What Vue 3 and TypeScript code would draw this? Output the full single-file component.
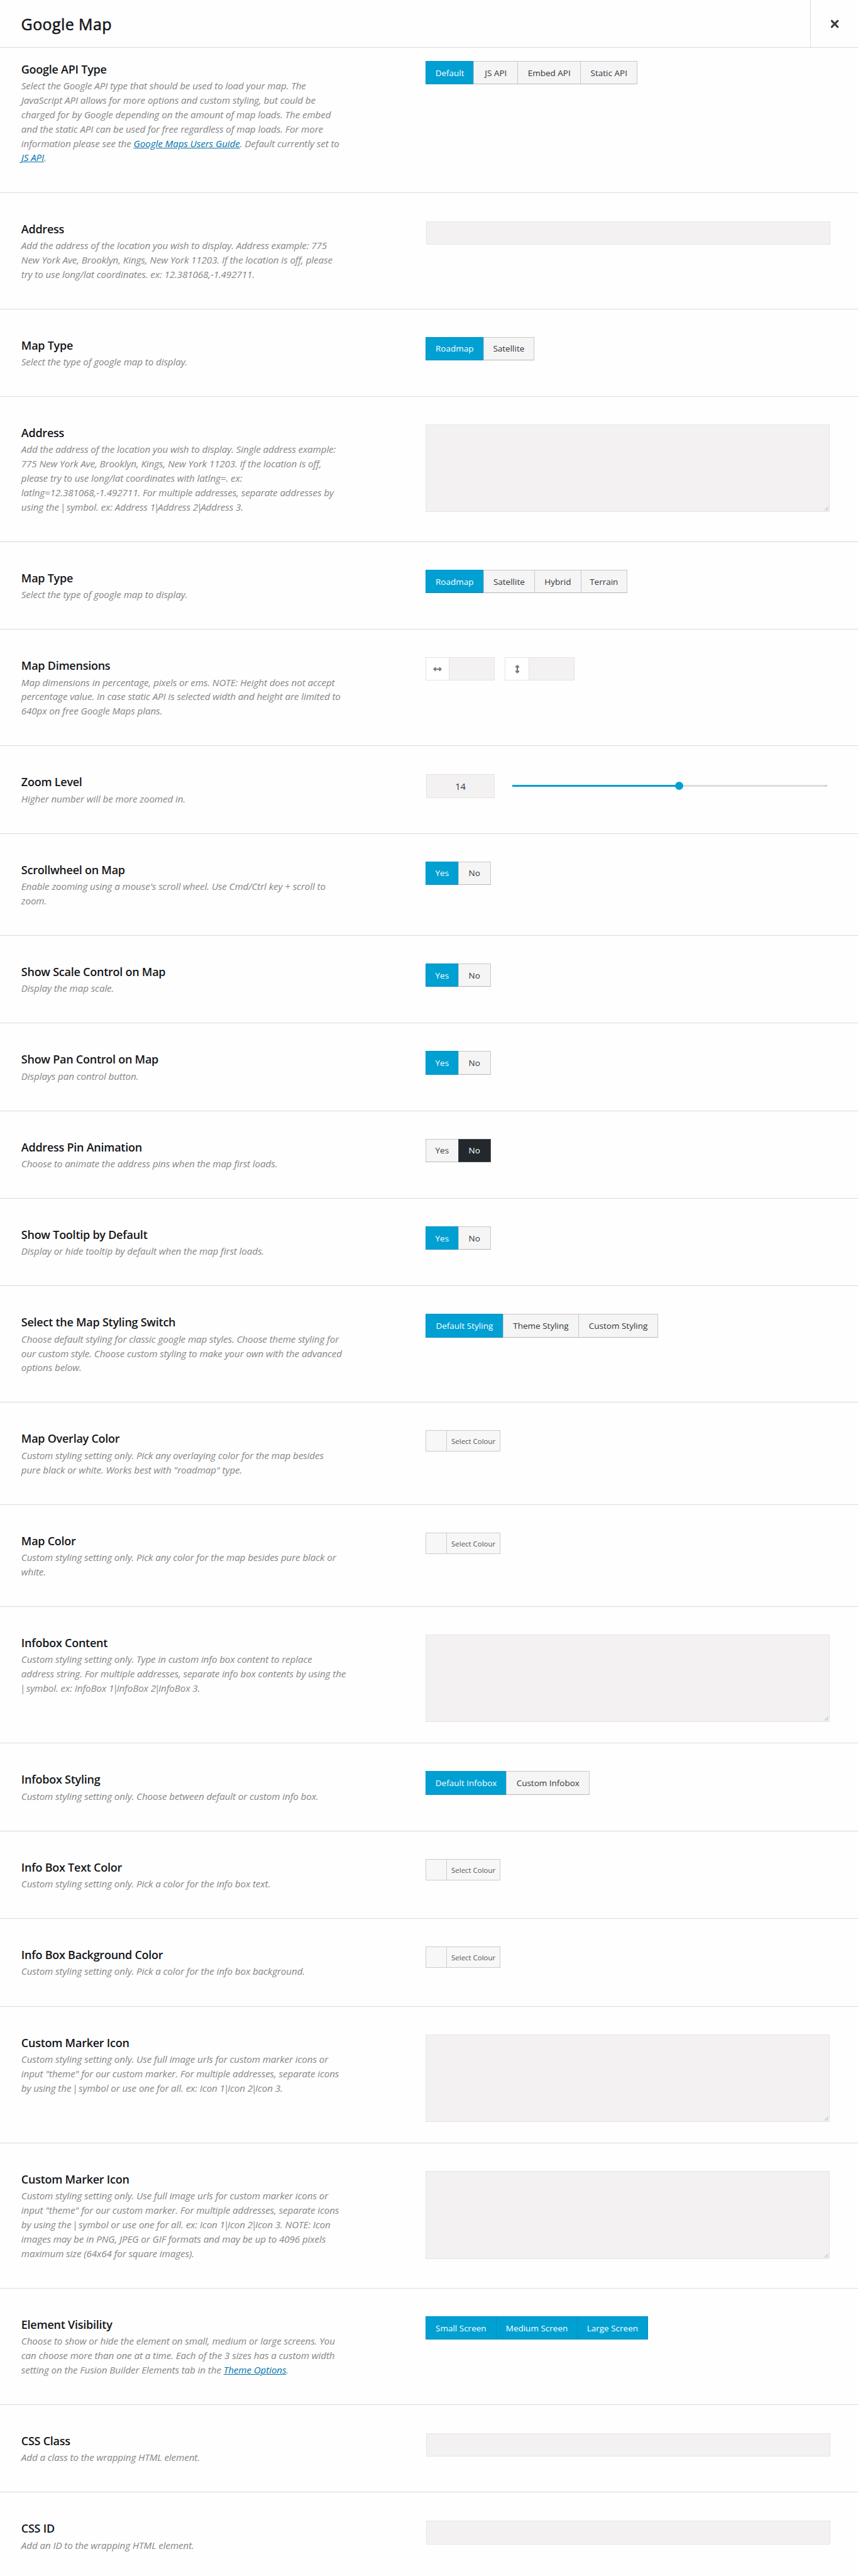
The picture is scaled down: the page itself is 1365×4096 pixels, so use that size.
<script setup lang="ts">
import { ref } from 'vue'

interface Option { label: string; width: number; tone?: 'on' | 'off' }
interface Part { text: string; link?: boolean; bar?: boolean }
interface Field {
  title: string
  lines: string[]
  kind: 'buttons' | 'input' | 'textarea' | 'dimensions' | 'range' | 'color'
  options?: Option[]
}

const yesNo = (value: boolean): Option[] => [
  { label: 'Yes', width: 52.1, tone: value ? 'on' : undefined },
  { label: 'No', width: 51.7, tone: value ? undefined : 'off' },
]

// Links are written as [label]; bars get their own span so they can be tightened.
const parse = (line: string): Part[] =>
  line
    .split(/(\[[^\]]+\]|\|)/)
    .filter((s) => s !== '')
    .map((s) =>
      s === '|' ? { text: s, bar: true } : s.startsWith('[') ? { text: s.slice(1, -1), link: true } : { text: s },
    )

const fields: Field[] = [
  {
    title: 'Google API Type',
    lines: [
      'Select the Google API type that should be used to load your map. The',
      'JavaScript API allows for more options and custom styling, but could be',
      'charged for by Google depending on the amount of map loads. The embed',
      'and the static API can be used for free regardless of map loads. For more',
      'information please see the [Google Maps Users Guide]. Default currently set to',
      '[JS API].',
    ],
    kind: 'buttons',
    options: [
      { label: 'Default', width: 76.7, tone: 'on' },
      { label: 'JS API', width: 69.7 },
      { label: 'Embed API', width: 100.1 },
      { label: 'Static API', width: 91 },
    ],
  },
  {
    title: 'Address',
    lines: [
      'Add the address of the location you wish to display. Address example: 775',
      'New York Ave, Brooklyn, Kings, New York 11203. If the location is off, please',
      'try to use long/lat coordinates. ex: 12.381068,-1.492711.',
    ],
    kind: 'input',
  },
  {
    title: 'Map Type',
    lines: ['Select the type of google map to display.'],
    kind: 'buttons',
    options: [
      { label: 'Roadmap', width: 91.9, tone: 'on' },
      { label: 'Satellite', width: 81.3 },
    ],
  },
  {
    title: 'Address',
    lines: [
      'Add the address of the location you wish to display. Single address example:',
      '775 New York Ave, Brooklyn, Kings, New York 11203. If the location is off,',
      'please try to use long/lat coordinates with latlng=. ex:',
      'latlng=12.381068,-1.492711. For multiple addresses, separate addresses by',
      'using the | symbol. ex: Address 1|Address 2|Address 3.',
    ],
    kind: 'textarea',
  },
  {
    title: 'Map Type',
    lines: ['Select the type of google map to display.'],
    kind: 'buttons',
    options: [
      { label: 'Roadmap', width: 91.9, tone: 'on' },
      { label: 'Satellite', width: 81.3 },
      { label: 'Hybrid', width: 73.8 },
      { label: 'Terrain', width: 74 },
    ],
  },
  {
    title: 'Map Dimensions',
    lines: [
      'Map dimensions in percentage, pixels or ems. NOTE: Height does not accept',
      'percentage value. In case static API is selected width and height are limited to',
      '640px on free Google Maps plans.',
    ],
    kind: 'dimensions',
  },
  { title: 'Zoom Level', lines: ['Higher number will be more zoomed in.'], kind: 'range' },
  {
    title: 'Scrollwheel on Map',
    lines: ["Enable zooming using a mouse's scroll wheel. Use Cmd/Ctrl key + scroll to", 'zoom.'],
    kind: 'buttons',
    options: yesNo(true),
  },
  { title: 'Show Scale Control on Map', lines: ['Display the map scale.'], kind: 'buttons', options: yesNo(true) },
  { title: 'Show Pan Control on Map', lines: ['Displays pan control button.'], kind: 'buttons', options: yesNo(true) },
  {
    title: 'Address Pin Animation',
    lines: ['Choose to animate the address pins when the map first loads.'],
    kind: 'buttons',
    options: yesNo(false),
  },
  {
    title: 'Show Tooltip by Default',
    lines: ['Display or hide tooltip by default when the map first loads.'],
    kind: 'buttons',
    options: yesNo(true),
  },
  {
    title: 'Select the Map Styling Switch',
    lines: [
      'Choose default styling for classic google map styles. Choose theme styling for',
      'our custom style. Choose custom styling to make your own with the advanced',
      'options below.',
    ],
    kind: 'buttons',
    options: [
      { label: 'Default Styling', width: 123.1, tone: 'on' },
      { label: 'Theme Styling', width: 120.2 },
      { label: 'Custom Styling', width: 127 },
    ],
  },
  {
    title: 'Map Overlay Color',
    lines: [
      'Custom styling setting only. Pick any overlaying color for the map besides',
      'pure black or white. Works best with "roadmap" type.',
    ],
    kind: 'color',
  },
  {
    title: 'Map Color',
    lines: ['Custom styling setting only. Pick any color for the map besides pure black or', 'white.'],
    kind: 'color',
  },
  {
    title: 'Infobox Content',
    lines: [
      'Custom styling setting only. Type in custom info box content to replace',
      'address string. For multiple addresses, separate info box contents by using the',
      '| symbol. ex: InfoBox 1|InfoBox 2|InfoBox 3.',
    ],
    kind: 'textarea',
  },
  {
    title: 'Infobox Styling',
    lines: ['Custom styling setting only. Choose between default or custom info box.'],
    kind: 'buttons',
    options: [
      { label: 'Default Infobox', width: 128.6, tone: 'on' },
      { label: 'Custom Infobox', width: 132.8 },
    ],
  },
  {
    title: 'Info Box Text Color',
    lines: ['Custom styling setting only. Pick a color for the info box text.'],
    kind: 'color',
  },
  {
    title: 'Info Box Background Color',
    lines: ['Custom styling setting only. Pick a color for the info box background.'],
    kind: 'color',
  },
  {
    title: 'Custom Marker Icon',
    lines: [
      'Custom styling setting only. Use full image urls for custom marker icons or',
      'input "theme" for our custom marker. For multiple addresses, separate icons',
      'by using the | symbol or use one for all. ex: Icon 1|Icon 2|Icon 3.',
    ],
    kind: 'textarea',
  },
  {
    title: 'Custom Marker Icon',
    lines: [
      'Custom styling setting only. Use full image urls for custom marker icons or',
      'input "theme" for our custom marker. For multiple addresses, separate icons',
      'by using the | symbol or use one for all. ex: Icon 1|Icon 2|Icon 3. NOTE: Icon',
      'images may be in PNG, JPEG or GIF formats and may be up to 4096 pixels',
      'maximum size (64x64 for square images).',
    ],
    kind: 'textarea',
  },
  {
    title: 'Element Visibility',
    lines: [
      'Choose to show or hide the element on small, medium or large screens. You',
      'can choose more than one at a time. Each of the 3 sizes has a custom width',
      'setting on the Fusion Builder Elements tab in the [Theme Options].',
    ],
    kind: 'buttons',
    options: [
      { label: 'Small Screen', width: 112, tone: 'on' },
      { label: 'Medium Screen', width: 129.4, tone: 'on' },
      { label: 'Large Screen', width: 112.4, tone: 'on' },
    ],
  },
  { title: 'CSS Class', lines: ['Add a class to the wrapping HTML element.'], kind: 'input' },
  { title: 'CSS ID', lines: ['Add an ID to the wrapping HTML element.'], kind: 'input' },
]

const zoom = ref(14)
const zoomPercent = 53.2
</script>

<template>
  <main class="panel">
    <header class="head">
      <h1>Google Map</h1>
      <button class="close" type="button" aria-label="Close">
        <svg viewBox="0 0 14 14" width="14" height="14"><path d="M2.3 2.1 11.7 11.9M11.7 2.1 2.3 11.9" /></svg>
      </button>
    </header>

    <section v-for="(f, i) in fields" :key="i" class="row">
      <div class="info">
        <h2>{{ f.title }}</h2>
        <p>
          <span v-for="(line, n) in f.lines" :key="n" class="line"
            ><template v-for="(p, k) in parse(line)" :key="k"
              ><a v-if="p.link" href="#">{{ p.text }}</a
              ><span v-else :class="{ bar: p.bar }">{{ p.text }}</span></template
            ></span
          >
        </p>
      </div>

      <div class="control" :class="f.kind">
        <div v-if="f.kind === 'buttons'" class="group">
          <button
            v-for="o in f.options"
            :key="o.label"
            type="button"
            class="opt"
            :class="o.tone"
            :style="{ width: o.width + 'px' }"
          >{{ o.label }}</button>
        </div>

        <div v-else-if="f.kind === 'input'" class="text-input"></div>

        <div v-else-if="f.kind === 'textarea'" class="text-area">
          <svg viewBox="0 0 8 8" width="7" height="7"><path d="M1 7.5 7.5 1M4.5 7.5 7.5 4.5" /></svg>
        </div>

        <template v-else-if="f.kind === 'dimensions'">
          <div class="dim">
            <span class="dim-icon">
              <svg viewBox="0 0 14 8" width="14" height="8">
                <path d="M0 4 3.6 .6 4.4 1V2.9H9.6V1L10.4 .6 14 4 10.4 7.4 9.6 7V5.1H4.4V7L3.6 7.4Z" />
              </svg>
            </span>
            <span class="dim-value"></span>
          </div>
          <div class="dim">
            <span class="dim-icon">
              <svg viewBox="0 0 8 14" width="8" height="14">
                <path d="M4 0 7.4 3.6 7 4.4H5.1V9.6H7L7.4 10.4 4 14 .6 10.4 1 9.6H2.9V4.4H1L.6 3.6Z" />
              </svg>
            </span>
            <span class="dim-value"></span>
          </div>
        </template>

        <template v-else-if="f.kind === 'range'">
          <div class="number">{{ zoom }}</div>
          <div class="track">
            <div class="fill" :style="{ width: zoomPercent + '%' }"></div>
            <div class="knob" :style="{ left: zoomPercent + '%' }"></div>
          </div>
        </template>

        <div v-else class="picker">
          <span class="swatch"></span>
          <span class="picker-label">Select Colour</span>
        </div>
      </div>
    </section>
  </main>
</template>

<style>
body {
  background: #fefefe;
}
</style>

<style scoped>
.panel {
  box-sizing: border-box;
  width: 1365px;
  height: 4096px;
  overflow: hidden;
  background: #fefefe;
  color: #131519;
  font-family: 'Open Sans', 'Noto Sans', sans-serif;
}
.panel *,
.panel *::before {
  box-sizing: border-box;
}
button {
  margin: 0;
  padding: 0;
  border: 0;
  font: inherit;
  background: none;
}
.head {
  display: flex;
  align-items: stretch;
  justify-content: space-between;
  height: 75.1px;
}
h1 {
  margin: 0;
  padding-left: 33.6px;
  font-size: 25px;
  font-weight: 400;
  letter-spacing: 0.4px;
  line-height: 76px;
  -webkit-text-stroke: 0.55px currentColor;
}
.close {
  display: flex;
  align-items: center;
  justify-content: center;
  width: 76px;
  border-left: 1px solid #ddd;
}
.close svg {
  fill: none;
  stroke: #3a3d40;
  stroke-width: 3;
  stroke-linecap: round;
}
.row {
  display: grid;
  grid-template-columns: 676.8px 1fr;
  border-top: 1px solid #dadada;
}
.row:nth-of-type(1) .info {
  padding-top: 21.7px;
}
.row:nth-of-type(1) .control {
  padding-top: 20.9px;
}
.info {
  padding: 45px 0 43.2px 33.8px;
}
h2 {
  margin: 0 0 3.3px;
  font-size: 18px;
  font-weight: 600;
  letter-spacing: -0.25px;
  line-height: 24px;
}
p {
  margin: 0;
  color: #868686;
  font-size: 15.2px;
  font-style: italic;
  letter-spacing: -0.1px;
  line-height: 22.87px;
}
.line {
  display: block;
  white-space: nowrap;
}
.bar {
  margin: 0 -2.1px;
}
a {
  color: #0073aa;
  text-decoration: underline;
}
.control {
  padding-top: 44px;
}
.group {
  display: flex;
}
.opt {
  height: 37.4px;
  border: 1px solid #c8c8c8;
  border-right-width: 0;
  border-bottom-color: #b8b8b8;
  background: #f5f5f5;
  color: #32373c;
  font-size: 13.5px;
  text-align: center;
  white-space: nowrap;
}
.opt:last-child {
  border-right-width: 1px;
}
.opt.on {
  border-color: #008fc4;
  background: #00a0d3;
  color: #fff;
}
.opt.off {
  border-color: #4c5054;
  background: #23282d;
  color: #fff;
}
.control.input,
.control.range {
  padding-top: 45px;
  padding-left: 1.1px;
}
.text-input,
.text-area {
  width: 642.8px;
  height: 37.5px;
  border: 1px solid #e6e5e6;
  background: #f3f1f2;
}
.control.textarea {
  padding-bottom: 33px;
}
.text-area {
  display: flex;
  align-items: flex-end;
  justify-content: flex-end;
  height: 139.5px;
  padding: 1px;
}
.text-area svg {
  fill: none;
  stroke: #999;
  stroke-width: 0.9;
}
.control.dimensions {
  display: flex;
  gap: 15.8px;
}
.dim {
  display: flex;
  width: 110.7px;
  height: 36.7px;
  border: 1px solid #e3e3e3;
}
.dim-icon {
  display: flex;
  align-items: center;
  justify-content: center;
  width: 36.5px;
  background: #fff;
}
.dim-icon svg {
  fill: #74787b;
}
.dim-value {
  flex: 1;
  border-left: 1px solid #e3e3e3;
  background: #f3f1f2;
}
.control.range {
  display: flex;
  gap: 27.5px;
}
.number {
  width: 109.2px;
  height: 37.4px;
  border: 1px solid #e3e3e3;
  background: #f3f1f2;
  color: #32373c;
  font-size: 14.6px;
  line-height: 37px;
  text-align: center;
}
.track {
  position: relative;
  width: 500.6px;
  height: 3px;
  margin-top: 16.6px;
  border-right: 1px solid #4cb9dd;
  background: #dcdcdc;
}
.fill {
  height: 3px;
  background: #0a9cd2;
}
.knob {
  position: absolute;
  top: -5px;
  width: 13.4px;
  height: 13.4px;
  margin-left: -6.7px;
  border-radius: 50%;
  background: #00a0d3;
}
.picker {
  display: flex;
  width: 119px;
  height: 33.9px;
  border: 1px solid #ccc;
  background: #f7f7f7;
}
.swatch {
  width: 33.6px;
  border-right: 1px solid #ccc;
}
.picker-label {
  flex: 1;
  color: #555;
  font-size: 11.45px;
  line-height: 34px;
  text-align: center;
  white-space: nowrap;
}
</style>
